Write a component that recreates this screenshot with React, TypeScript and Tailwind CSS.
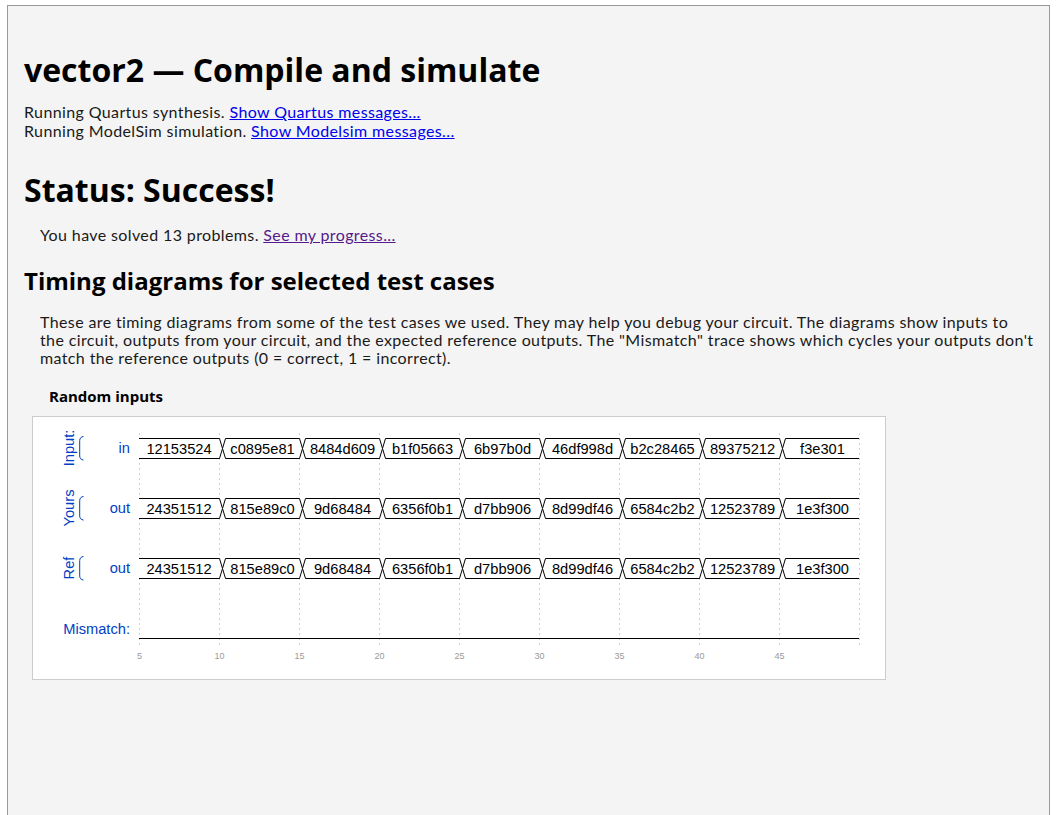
import React from "react";

const BODY = { fontFamily: "Lato, 'Open Sans', sans-serif", letterSpacing: "0.38px" };
const HEAD = { fontFamily: "'Open Sans', 'Noto Sans', sans-serif", letterSpacing: "0px" };

const rows = [
  { vals: ["12153524", "c0895e81", "8484d609", "b1f05663", "6b97b0d", "46df998d", "b2c28465", "89375212", "f3e301"] },
  { vals: ["24351512", "815e89c0", "9d68484", "6356f0b1", "d7bb906", "8d99df46", "6584c2b2", "12523789", "1e3f300"] },
  { vals: ["24351512", "815e89c0", "9d68484", "6356f0b1", "d7bb906", "8d99df46", "6584c2b2", "12523789", "1e3f300"] },
];

const X0 = 106;
const P = 80;
const BLUE = "#0041c4";
const ARIAL = "'Liberation Sans', Arial, sans-serif";

function Lane({ mid, vals }: { mid: number; vals: string[] }) {
  const top = mid - 9.5;
  const bot = mid + 10.5;
  const m = mid + 0.5;
  const t = (k: number) => X0 + P * k + 3.5;
  const end = X0 + P * 9;
  const shapes: React.ReactNode[] = [];
  vals.forEach((v, k) => {
    let d = "";
    if (k === 0) {
      d = `M${X0},${top} H${t(1) - 3} L${t(1)},${m} L${t(1) - 3},${bot} H${X0}`;
    } else if (k === vals.length - 1) {
      d = `M${end},${top} H${t(k) + 3} L${t(k)},${m} L${t(k) + 3},${bot} H${end}`;
    } else {
      d = `M${t(k)},${m} L${t(k) + 3},${top} H${t(k + 1) - 3} L${t(k + 1)},${m} L${t(k + 1) - 3},${bot} H${t(k) + 3} Z`;
    }
    const cx = k === 0 ? 146 : X0 + P * k + 43.5;
    shapes.push(
      <g key={k}>
        <path d={d} fill="#fff" stroke="#000" strokeWidth={1} />
        <text x={cx} y={mid + 6.3} textAnchor="middle" fontSize={14.67} fill="#000" fontFamily={ARIAL}>
          {v}
        </text>
      </g>
    );
  });
  return <g>{shapes}</g>;
}

function Group({ mid, label }: { mid: number; label: string }) {
  return (
    <g>
      <text
        x={0}
        y={0}
        transform={`translate(40.5 ${mid}) rotate(-90)`}
        textAnchor="middle"
        fontSize={14.67}
        fill={BLUE}
        fontFamily={ARIAL}
      >
        {label}
      </text>
      <path
        d={`M50.5,${mid - 11.5} c-2.2,0 -3.8,1.8 -3.8,4 V${mid + 8} c0,2.2 1.6,4 3.8,4`}
        fill="none"
        stroke={BLUE}
        strokeWidth={1}
      />
    </g>
  );
}

function Diagram() {
  const mids = [31, 91, 151];
  return (
    <svg width={852} height={262} viewBox="0 0 852 262" className="block" style={{ letterSpacing: "0px" }}>
      {Array.from({ length: 10 }).map((_, k) => (
        <line
          key={k}
          x1={X0 + P * k + 0.5}
          x2={X0 + P * k + 0.5}
          y1={16}
          y2={228}
          stroke="#d0d0d0"
          strokeWidth={1}
          strokeDasharray="2 3"
        />
      ))}
      {Array.from({ length: 9 }).map((_, k) => (
        <text key={k} x={X0 + P * k + 0.5} y={242} textAnchor="middle" fontSize={9} fill="#9a9a9a" fontFamily={ARIAL}>
          {5 + 5 * k}
        </text>
      ))}
      <Group mid={mids[0]} label="Input:" />
      <Group mid={mids[1]} label="Yours" />
      <Group mid={mids[2]} label="Ref" />
      {["in", "out", "out"].map((l, i) => (
        <text key={i} x={97} y={mids[i] + 5.3} textAnchor="end" fontSize={14.67} fill={BLUE} fontFamily={ARIAL}>
          {l}
        </text>
      ))}
      {rows.map((r, i) => (
        <Lane key={i} mid={mids[i]} vals={r.vals} />
      ))}
      <text x={97} y={217} textAnchor="end" fontSize={14.67} fill={BLUE} fontFamily={ARIAL}>
        Mismatch:
      </text>
      <line x1={X0} x2={X0 + 720} y1={221.5} y2={221.5} stroke="#000" strokeWidth={1} />
    </svg>
  );
}

export default function App() {
  return (
    <div className="bg-white min-h-[815px] pt-[5px] pl-[7px]">
      <div className="w-[1043px] h-[900px] border border-[#999] bg-[#f4f4f4] pl-4 text-[#1a1a1a]" style={BODY}>
        <h1 className="mt-[45px] text-[32px] leading-[38px] font-bold text-black" style={HEAD}>
          vector2 — Compile and simulate
        </h1>
        <div className="mt-[14px] text-[16px] leading-[18.5px]">
          <div>
            Running Quartus synthesis.{" "}
            <a href="#" className="text-[#0000ee] underline">
              Show Quartus messages...
            </a>
          </div>
          <div>
            Running ModelSim simulation.{" "}
            <a href="#" className="text-[#0000ee] underline">
              Show Modelsim messages...
            </a>
          </div>
        </div>
        <h1 className="mt-[31px] text-[32px] leading-[38px] font-bold text-black" style={HEAD}>
          Status: Success!
        </h1>
        <div className="mt-[17px] pl-4 text-[16px] leading-[18.5px]">
          You have solved 13 problems.{" "}
          <a href="#" className="text-[#551a8b] underline">
            See my progress...
          </a>
        </div>
        <h2 className="mt-[21px] text-[24px] leading-[29px] font-bold text-black" style={HEAD}>
          Timing diagrams for selected test cases
        </h2>
        <p className="mt-[18px] pl-4 pr-2 text-[16px] leading-[18.4px] whitespace-nowrap">
          These are timing diagrams from some of the test cases we used. They may help you debug your circuit. The diagrams show inputs to
          <br />
          the circuit, outputs from your circuit, and the expected reference outputs. The "Mismatch" trace shows which cycles your outputs don't
          <br />
          match the reference outputs (0 = correct, 1 = incorrect).
        </p>
        <div className="mt-[18.5px] pl-[25px] text-[15px] leading-[20px] font-bold text-black" style={HEAD}>
          Random inputs
        </div>
        <div className="mt-[9.5px] ml-2 w-[854px] border border-[#ccc] bg-white">
          <Diagram />
        </div>
      </div>
    </div>
  );
}
